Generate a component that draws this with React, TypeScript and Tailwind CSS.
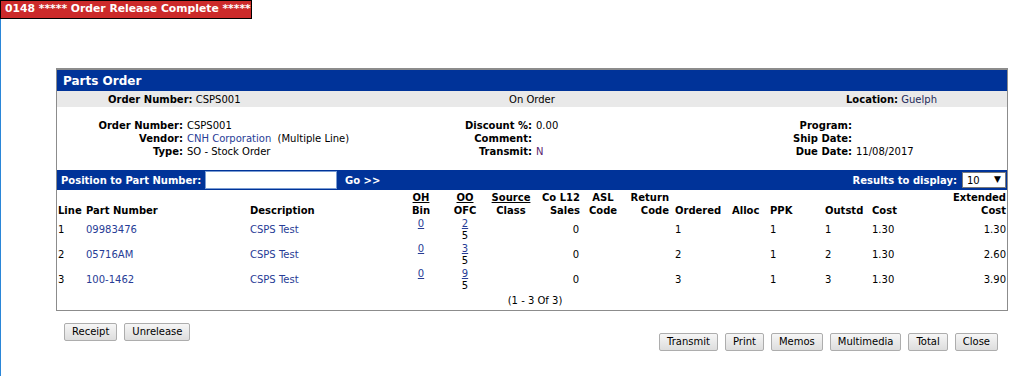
import React from 'react';

const rows = [
  { line: '1', part: '09983476', desc: 'CSPS Test', oh: '0', oo: '2', ofc: '5', sales: '0', ordered: '1', ppk: '1', outstd: '1', cost: '1.30', ext: '1.30' },
  { line: '2', part: '05716AM', desc: 'CSPS Test', oh: '0', oo: '3', ofc: '5', sales: '0', ordered: '2', ppk: '1', outstd: '2', cost: '1.30', ext: '2.60' },
  { line: '3', part: '100-1462', desc: 'CSPS Test', oh: '0', oo: '9', ofc: '5', sales: '0', ordered: '3', ppk: '1', outstd: '3', cost: '1.30', ext: '3.90' },
];

function Btn({ label }: { label: string }) {
  return (
    <button className="h-[18px] px-[7px] bg-gradient-to-b from-[#f6f6f6] to-[#dddddd] border border-[#adadad] rounded-[2px] text-[10px] leading-none text-black">
      {label}
    </button>
  );
}

function InfoRow({ label, value, labelW, valueClass = 'text-black' }: { label: string; value?: React.ReactNode; labelW: string; valueClass?: string }) {
  return (
    <div className="flex h-[13px] items-center">
      <span className={`${labelW} text-right font-bold`}>{label}</span>
      <span className={`ml-[4px] ${valueClass}`}>{value}</span>
    </div>
  );
}

export default function App() {
  return (
    <div className="w-[1032px] h-[376px] bg-white text-[10px] text-black overflow-hidden" style={{ fontFamily: '"DejaVu Sans", Verdana, sans-serif' }}>
      {/* status banner */}
      <div className="w-[252px] h-[19px] bg-[#cc2a2a] border border-black flex items-center pl-[4px] text-white font-bold text-[10.8px] whitespace-nowrap">
        0148 ***** Order Release Complete *****
      </div>

      <div className="border-l border-[#2a86d8] h-[357px] pt-[49px] pl-[55px]">
        {/* panel */}
        <div className="w-[952px] border border-[#8c8c8c] border-t-2 border-t-[#8c8c8c]">
          <div className="h-[21px] bg-[#003399] text-white font-bold text-[12px] flex items-center pl-[6px]">
            Parts Order
          </div>
          <div className="h-[16px] bg-[#e9e9e9] grid grid-cols-3 items-center">
            <div className="pl-[51px]">
              <span className="font-bold">Order Number:</span> CSPS001
            </div>
            <div className="text-center">On Order</div>
            <div className="text-right pr-[70px]">
              <span className="font-bold">Location:</span> <span className="text-[#1e2a5a]">Guelph</span>
            </div>
          </div>

          {/* info */}
          <div className="flex pt-[12px] pb-[12px]">
            <div className="w-[346px]">
              <InfoRow labelW="w-[126px]" label="Order Number:" value="CSPS001" />
              <InfoRow labelW="w-[126px]" label="Vendor:" value={<><span className="text-[#273c96]">CNH Corporation</span><span>&nbsp; (Multiple Line)</span></>} />
              <InfoRow labelW="w-[126px]" label="Type:" value="SO - Stock Order" />
            </div>
            <div className="w-[330px]">
              <InfoRow labelW="w-[129px]" label="Discount %:" value="0.00" />
              <InfoRow labelW="w-[129px]" label="Comment:" />
              <InfoRow labelW="w-[129px]" label="Transmit:" value="N" valueClass="text-[#5a1f6e]" />
            </div>
            <div className="flex-1">
              <InfoRow labelW="w-[119px]" label="Program:" />
              <InfoRow labelW="w-[119px]" label="Ship Date:" />
              <InfoRow labelW="w-[119px]" label="Due Date:" value="11/08/2017" />
            </div>
          </div>

          {/* search bar */}
          <div className="h-[20px] bg-[#003399] flex items-center text-white font-bold whitespace-nowrap">
            <span className="pl-[4px] w-[148px]">Position to Part Number:</span>
            <input className="w-[132px] h-[18px] bg-white border border-[#7a9cd3] text-black px-[2px] outline-none" />
            <span className="ml-[8px]">Go &gt;&gt;</span>
            <span className="ml-auto">Results to display:</span>
            <div className="ml-[5px] mr-[1px] w-[44px] h-[16px] bg-white border border-[#7a7a7a] text-black font-normal flex items-center justify-between px-[4px]">
              <span>10</span>
              <span className="text-[9px]">▼</span>
            </div>
          </div>

          {/* parts table */}
          <table className="table-fixed border-collapse w-[950px] mt-[1px]">
            <colgroup>
              <col className="w-[27px]" />
              <col className="w-[164px]" />
              <col className="w-[152px]" />
              <col className="w-[42px]" />
              <col className="w-[46px]" />
              <col className="w-[46px]" />
              <col className="w-[48px]" />
              <col className="w-[42px]" />
              <col className="w-[48px]" />
              <col className="w-[58px]" />
              <col className="w-[38px]" />
              <col className="w-[55px]" />
              <col className="w-[47px]" />
              <col className="w-[60px]" />
              <col className="w-[77px]" />
            </colgroup>
            <thead>
              <tr className="leading-[13px] align-bottom">
                <th className="text-left pl-[1px] font-bold">Line</th>
                <th className="text-left pl-[2px] font-bold">Part Number</th>
                <th className="text-left pl-[2px] font-bold">Description</th>
                <th className="text-center font-bold"><span className="underline">OH</span><br />Bin</th>
                <th className="text-center font-bold"><span className="underline">OO</span><br />OFC</th>
                <th className="text-center font-bold"><span className="underline">Source</span><br />Class</th>
                <th className="text-right pr-[2px] font-bold">Co L12<br />Sales</th>
                <th className="text-center font-bold">ASL<br />Code</th>
                <th className="text-right pr-[3px] font-bold">Return<br />Code</th>
                <th className="text-left pl-[3px] font-bold">Ordered</th>
                <th className="text-left pl-[2px] font-bold">Alloc</th>
                <th className="text-left pl-[2px] font-bold">PPK</th>
                <th className="text-left pl-[2px] font-bold">Outstd</th>
                <th className="text-left pl-[2px] font-bold">Cost</th>
                <th className="text-right pr-[1px] font-bold">Extended<br />Cost</th>
              </tr>
            </thead>
            <tbody>
              {rows.map((r) => (
                <tr key={r.line} className="h-[25px] leading-[13px] align-middle">
                  <td className="pl-[1px] p-0">{r.line}</td>
                  <td className="pl-[2px] text-[#273c96]">{r.part}</td>
                  <td className="pl-[2px] text-[#273c96]">{r.desc}</td>
                  <td className="text-center align-top"><span className="underline text-[#273c96]">{r.oh}</span></td>
                  <td className="text-center align-top">
                    <div className="leading-[13px]"><span className="underline text-[#273c96]">{r.oo}</span></div>
                    <div className="leading-[12px]">{r.ofc}</div>
                  </td>
                  <td></td>
                  <td className="text-right pr-[3px]">{r.sales}</td>
                  <td></td>
                  <td></td>
                  <td className="pl-[3px]">{r.ordered}</td>
                  <td></td>
                  <td className="pl-[2px]">{r.ppk}</td>
                  <td className="pl-[2px]">{r.outstd}</td>
                  <td className="pl-[2px]">{r.cost}</td>
                  <td className="text-right pr-[1px]">{r.ext}</td>
                </tr>
              ))}
            </tbody>
          </table>
          <div className="text-center h-[18px] pt-[1px] pl-[6px]">(1 - 3 Of 3)</div>
        </div>

        {/* actions */}
        <div className="flex w-[952px] pt-[12px] pl-[8px] pr-[10px]">
          <div className="flex gap-[7px]">
            <Btn label="Receipt" />
            <Btn label="Unrelease" />
          </div>
          <div className="flex gap-[7px] ml-auto mt-[10px]">
            <Btn label="Transmit" />
            <Btn label="Print" />
            <Btn label="Memos" />
            <Btn label="Multimedia" />
            <Btn label="Total" />
            <Btn label="Close" />
          </div>
        </div>
      </div>
    </div>
  );
}
